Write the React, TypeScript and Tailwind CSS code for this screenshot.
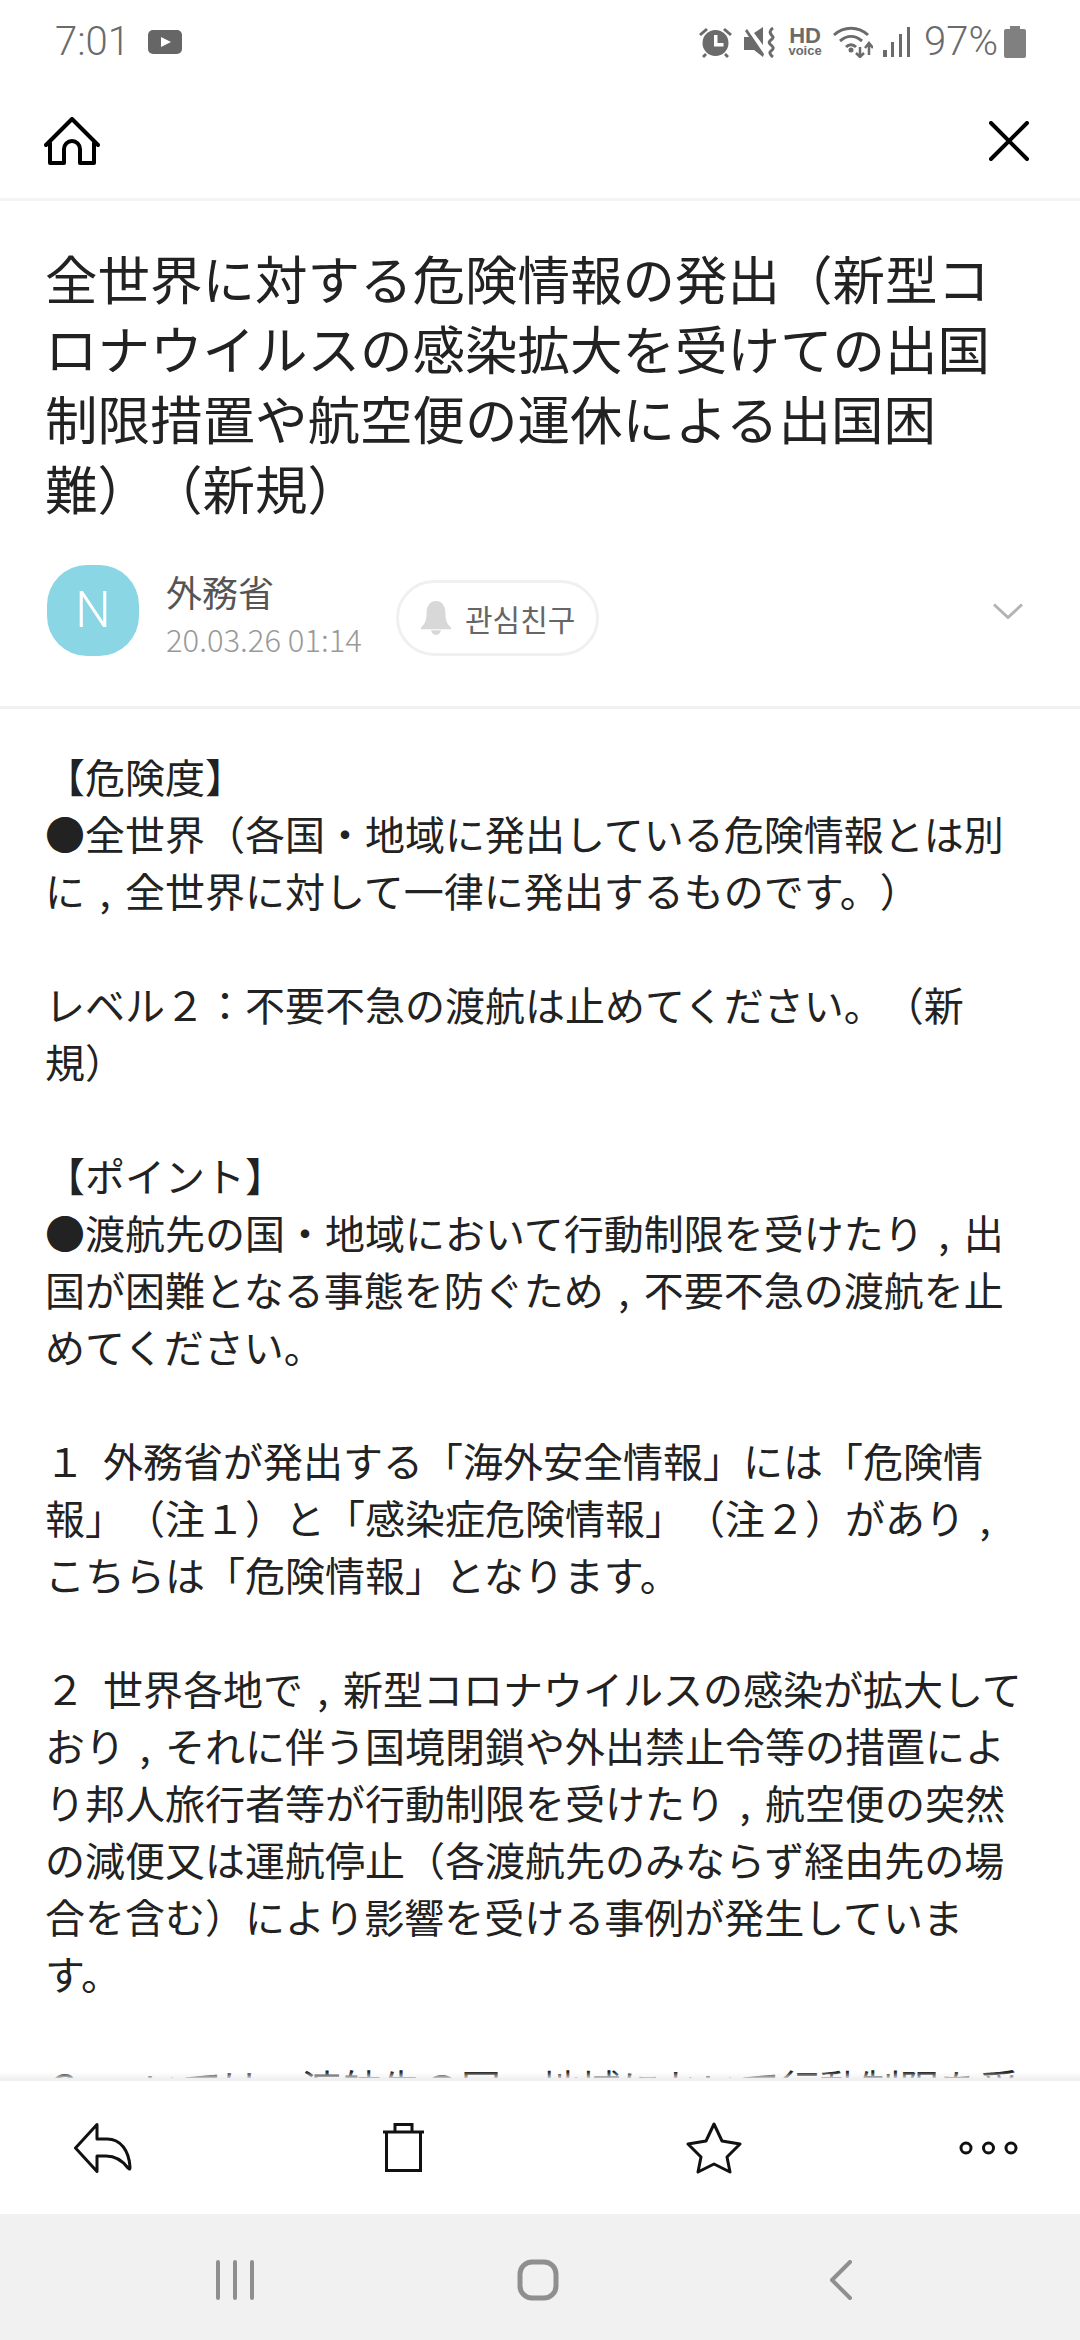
import React from 'react';

const font = 'font-["Noto_Sans_CJK_JP","Noto_Sans",sans-serif]';

const bodyLines = [
  '【危険度】',
  '●全世界（各国・地域に発出している危険情報とは別',
  'に，全世界に対して一律に発出するものです。）',
  '',
  'レベル２：不要不急の渡航は止めてください。（新',
  '規）',
  '',
  '【ポイント】',
  '●渡航先の国・地域において行動制限を受けたり，出',
  '国が困難となる事態を防ぐため，不要不急の渡航を止',
  'めてください。',
  '',
  '１  外務省が発出する「海外安全情報」には「危険情',
  '報」（注１）と「感染症危険情報」（注２）があり，',
  'こちらは「危険情報」となります。',
  '',
  '２  世界各地で，新型コロナウイルスの感染が拡大して',
  'おり，それに伴う国境閉鎖や外出禁止令等の措置によ',
  'り邦人旅行者等が行動制限を受けたり，航空便の突然',
  'の減便又は運航停止（各渡航先のみならず経由先の場',
  '合を含む）により影響を受ける事例が発生していま',
  'す。',
  '',
  '３  ついては，渡航先の国・地域において行動制限を受',
];

// the comma sits in the middle of its em box in the reference
const BodyLine: React.FC<{ text: string }> = ({ text }) => (
  <div className="h-[57px] whitespace-pre">
    {text.split('，').map((part, i) => (
      <React.Fragment key={i}>
        {i > 0 && <span className="inline-block w-[1em] text-center">,</span>}
        {part}
      </React.Fragment>
    ))}
  </div>
);

const StatusBar: React.FC = () => (
  <div className="flex h-[84px] items-center justify-between pl-[55px] pr-[54px] text-[#6b6b6b]">
    <div className="flex items-center gap-[18px]">
      <span className="font-['Roboto'] text-[40px] font-light leading-none">7:01</span>
      <svg width="34" height="24" viewBox="0 0 34 24">
        <rect width="34" height="24" rx="5" fill="#666" />
        <path d="M13 7l10 5-10 5z" fill="#fff" />
      </svg>
    </div>
    <div className="flex items-center">
      <svg width="33" height="31" viewBox="0 0 33 31" className="mr-[12px]" fill="#6b6b6b">
        <circle cx="16.5" cy="16" r="13" />
        <path d="M15 8h3.500v8h6v3.500H15z" fill="#fff" />
        <path d="M0 7l7-6 2 2-7 6zM33 7l-7-6-2 2 7 6zM6 26l-3 3 2 2 3-3zM27 26l3 3-2 2-3-3z" />
      </svg>
      <svg width="31" height="31" viewBox="0 0 31 31" className="mr-[14px]" fill="#6b6b6b">
        <path d="M0 10h5L1 4l2-2 17 25-1 3-9-7H0z" />
        <path d="M10 6l9-6v18z" />
        <path d="M29 1c-6 4-1 7 0 9s-6 4-3 7 5 4 1 7c-2 1-1 4 2 6" fill="none" stroke="#6b6b6b" strokeWidth="3" />
      </svg>
      <div className="mr-[12px] flex w-[32px] flex-col items-center font-['Liberation_Sans'] leading-none">
        <span className="text-[22px] font-bold leading-[18px]">HD</span>
        <span className="text-[13px] font-bold leading-[12px]">voice</span>
      </div>
      <svg width="40" height="32" viewBox="0 0 40 32" className="mr-[10px]" fill="none" stroke="#6b6b6b" strokeWidth="3">
        <path d="M1 9c10-9 24-9 34 0M7 15c7-6 15-6 22 0M13 21c3-3 7-3 10 0" />
        <circle cx="18" cy="24" r="2.500" fill="#6b6b6b" stroke="none" />
        <path d="M27 21v10M23 27l4 4 4-4M36 29V17M32 22l4-5 4 5" strokeWidth="2.500" />
      </svg>
      <svg width="27" height="30" viewBox="0 0 27 30" className="mr-[14px]" fill="#6b6b6b">
        <rect x="0" y="23" width="4" height="7" />
        <rect x="8" y="15" width="3" height="15" />
        <rect x="16" y="7" width="3" height="23" />
        <rect x="24" y="0" width="3" height="30" />
      </svg>
      <span className="font-['Roboto'] text-[40px] font-light leading-none">97%</span>
      <svg width="22" height="32" viewBox="0 0 22 32" className="ml-[6px]" fill="#808080">
        <path d="M6 0h10v3h4a2 2 0 012 2v25a2 2 0 01-2 2H2a2 2 0 01-2-2V5a2 2 0 012-2h4z" />
      </svg>
    </div>
  </div>
);

const App: React.FC = () => (
  <div className={`flex h-[2340px] w-[1080px] flex-col overflow-hidden bg-white [text-spacing-trim:space-all] ${font}`}>
    <StatusBar />
    <div className="flex h-[117px] shrink-0 items-center justify-between border-b-[3px] border-[#f4f4f4] pl-[44px] pr-[51px]">
      <svg width="56" height="48" viewBox="0 0 56 48" fill="none" stroke="#000" strokeWidth="4" strokeLinejoin="round" strokeLinecap="round">
        <path d="M2 28L28 2l26 26M6 26v20h14V32a8 8 0 0116 0v14h14V26" />
      </svg>
      <svg width="40" height="40" viewBox="0 0 40 40" stroke="#000" strokeWidth="4" strokeLinecap="round">
        <path d="M2 2l36 36M38 2L2 38" />
      </svg>
    </div>
    <h1 className="mt-[41px] px-[45px] text-[52.5px] font-normal leading-[70px] text-[#222]">
      <div className="whitespace-pre">全世界に対する危険情報の発出（新型コ</div>
      <div className="whitespace-pre">ロナウイルスの感染拡大を受けての出国</div>
      <div className="whitespace-pre">制限措置や航空便の運休による出国困</div>
      <div className="whitespace-pre">難）（新規）</div>
    </h1>
    <div className="flex h-[187px] shrink-0 items-start border-b-[3px] border-[#f0f0f0] pl-[47px] pr-[57px] pt-[43px]">
      <div className="flex h-[91px] w-[92px] items-center justify-center rounded-[40px] bg-[#8bd6e4] font-['Roboto'] text-[50px] font-light text-white">N</div>
      <div className="ml-[27px] mt-[2px] flex w-[230px] flex-col">
        <span className="text-[36px] leading-[48px] text-[#555]">外務省</span>
        <span className="text-[31px] font-light leading-[48px] text-[#999]">20.03.26 01:14</span>
      </div>
      <div className="mt-[15px] flex h-[76px] w-[203px] items-center rounded-full border-[3px] border-[#f0f0f0] pl-[21px]">
        <svg width="32" height="34" viewBox="0 0 32 36" fill="#d8d8d8">
          <path d="M16 0c7 0 10 6 10 13 0 8 2 12 6 15v2H0v-2c4-3 6-7 6-15C6 6 9 0 16 0z" />
          <path d="M11 31h10a5 5 0 01-10 0z" />
        </svg>
        <span className="ml-[13px] font-['Noto_Sans_CJK_KR'] text-[30px] leading-none text-[#666]">관심친구</span>
      </div>
      <svg width="30" height="16" viewBox="0 0 30 16" className="ml-auto mt-[38px]" fill="none" stroke="#b4b4b4" strokeWidth="3">
        <path d="M1 1.500l14 13 14-13" />
      </svg>
    </div>
    <div className="min-h-0 flex-1 overflow-hidden px-[45px] pt-[39px] text-[40px] leading-[57px] text-[#222]">
      {bodyLines.map((line, i) => (
        <BodyLine key={i} text={line} />
      ))}
    </div>
    <div className="relative flex h-[136px] shrink-0 items-center border-t-[3px] border-[#f0f0f0] pl-[74px]">
      <div className="absolute left-0 right-0 top-[-9px] h-[6px] bg-gradient-to-b from-white/0 to-[#f0f0f0]/80" />
      <svg width="58" height="50" viewBox="0 0 58 50" fill="none" stroke="#111" strokeWidth="3" strokeLinejoin="round">
        <path d="M23 1.500L1.500 25 23 48.500V33h9c9 0 16 4 22 12 2 2 2 1 2-1C55 28 47 16 33 16H23z" />
      </svg>
      <svg width="41" height="49" viewBox="0 0 41 49" className="ml-[251px]" fill="none" stroke="#111" strokeWidth="3">
        <path d="M12 8V1.500h17V8M0 9h41M3.500 9v38.500h34V9" />
      </svg>
      <svg width="56" height="53" viewBox="0 0 56 53" className="ml-[262px]" fill="none" stroke="#111" strokeWidth="3" strokeLinejoin="round">
        <path d="M28 3l8 17 18 3-13 13 3 15-16-8-16 8 3-15L2 23l18-3z" />
      </svg>
      <svg width="59" height="14" viewBox="0 0 59 14" className="ml-[217px]" fill="none" stroke="#111" strokeWidth="3">
        <circle cx="7" cy="7" r="5" />
        <circle cx="29.500" cy="7" r="5" />
        <circle cx="52" cy="7" r="5" />
      </svg>
    </div>
    <div className="flex h-[126px] shrink-0 items-center bg-[#f1f1f1] pl-[216px] pt-[6px]">
      <svg width="38" height="40" viewBox="0 0 38 40" stroke="#8f8f8f" strokeWidth="4" strokeLinecap="round">
        <path d="M2 2v36M19 2v36M36 2v36" />
      </svg>
      <svg width="42" height="42" viewBox="0 0 42 42" className="ml-[263px]" fill="none" stroke="#8f8f8f" strokeWidth="5">
        <rect x="3" y="3" width="36" height="36" rx="12" />
      </svg>
      <svg width="24" height="40" viewBox="0 0 24 40" className="ml-[270px]" fill="none" stroke="#8f8f8f" strokeWidth="4" strokeLinecap="round" strokeLinejoin="round">
        <path d="M21 2L3 20l18 18" />
      </svg>
    </div>
  </div>
);

export default App;
